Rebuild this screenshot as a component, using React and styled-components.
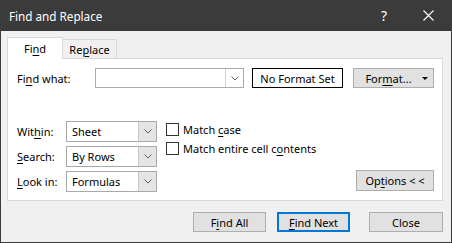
import React from 'react'
import styled, { createGlobalStyle } from 'styled-components'

const Global = createGlobalStyle`
  html, body { margin: 0; padding: 0; background: #f0f0f0; }
  body { font-family: "Noto Sans", "Open Sans", sans-serif; font-size: 11px; color: #000; }
`

const Window = styled.div`
  width: 452px;
  height: 243px;
  box-sizing: border-box;
  border: 1px solid #3b3b3b;
  border-top: none;
  background: #f0f0f0;
  display: flex;
  flex-direction: column;
`
const TitleBar = styled.div`
  height: 31px;
  background: #3b3b3b;
  color: #fff;
  display: flex;
  align-items: center;
  padding-left: 8px;
  font-size: 11.7px;
  flex-shrink: 0;
`
const Title = styled.div`
  flex: 1;
`
const TitleBtn = styled.div`
  width: ${p => p.w}px;
  margin-right: ${p => p.mr || 0}px;
  height: 31px;
  display: flex;
  align-items: center;
  justify-content: center;
  font-size: 14px;
`
const Body = styled.div`
  padding: 7px 8px 0 6px;
  display: flex;
  flex-direction: column;
`
const TabRow = styled.div`
  display: flex;
  align-items: flex-end;
  height: 21px;
  margin-bottom: -1px;
`
const Tab = styled.div`
  box-sizing: border-box;
  width: ${p => p.w}px;
  height: ${p => (p.active ? 22 : 20)}px;
  border: 1px solid #d9d9d9;
  border-bottom: ${p => (p.active ? 'none' : '1px solid #d9d9d9')};
  border-left: ${p => (p.first ? '1px solid #d9d9d9' : 'none')};
  background: ${p => (p.active ? '#fff' : '#f0f0f0')};
  display: flex;
  align-items: center;
  justify-content: center;
  position: relative;
  z-index: 1;
`
const Panel = styled.div`
  box-sizing: border-box;
  height: 143px;
  border: 1px solid #d9d9d9;
  background: #fff;
  padding: 9px 8px 0 9px;
  display: flex;
  flex-direction: column;
`
const Row = styled.div`
  display: flex;
  align-items: center;
  height: 20px;
`
const Label = styled.div`
  width: ${p => p.w}px;
  flex-shrink: 0;
  white-space: nowrap;
`
const Combo = styled.div`
  box-sizing: border-box;
  width: ${p => p.w}px;
  height: ${p => p.h}px;
  border: 1px solid #a9a9a9;
  background: #fff;
  display: flex;
`
const ComboText = styled.div`
  flex: 1;
  padding-left: 5px;
  display: flex;
  align-items: center;
`
const ComboBtn = styled.div`
  width: 17px;
  background: ${p => (p.light ? '#fff' : '#e5e5e5')};
  border-left: 1px solid ${p => (p.light ? '#d0d0d0' : '#c8c8c8')};
  display: flex;
  align-items: center;
  justify-content: center;
`
const FormatBox = styled.div`
  box-sizing: border-box;
  width: 91px;
  height: 20px;
  margin-left: 8px;
  border: 1px solid #000;
  display: flex;
  align-items: center;
  justify-content: center;
`
const Button = styled.div`
  box-sizing: border-box;
  width: ${p => p.w}px;
  height: ${p => p.h || 20}px;
  margin-left: ${p => p.ml || 0}px;
  background: #e1e1e1;
  border: ${p => (p.primary ? '2px solid #0078d7' : '1px solid #adadad')};
  display: flex;
  align-items: center;
  justify-content: center;
  position: relative;
  white-space: nowrap;
`
const Caret = styled.span`
  position: absolute;
  right: 5px;
  top: 8px;
  width: 0;
  height: 0;
  border-left: 3px solid transparent;
  border-right: 3px solid transparent;
  border-top: 3px solid #000;
`
const Lower = styled.div`
  margin-top: 33px;
  display: flex;
`
const Grid = styled.div`
  display: grid;
  grid-template-columns: 49px 91px;
  grid-auto-rows: 21px;
  row-gap: 4px;
  align-items: center;
`
const Checks = styled.div`
  margin-left: 9px;
  padding-top: 1px;
  display: flex;
  flex-direction: column;
  gap: 4px;
`
const CheckRow = styled.div`
  display: flex;
  align-items: center;
  height: 15px;
  gap: 4px;
`
const Box = styled.div`
  box-sizing: border-box;
  width: 13px;
  height: 13px;
  border: 1px solid #333;
  background: #fff;
`
const Spacer = styled.div`
  flex: 1;
  display: flex;
  align-items: flex-end;
  justify-content: flex-end;
  padding-bottom: 1px;
`
const Footer = styled.div`
  margin-top: 11px;
  display: flex;
  justify-content: flex-end;
`
const U = styled.u`
  text-underline-offset: 2px;
`

const Chevron = () => (
  <svg width="8" height="5" viewBox="0 0 8 5">
    <polyline points="0.5,0.5 4,4 7.5,0.5" fill="none" stroke="#606060" strokeWidth="1" />
  </svg>
)

const Select = ({ w, h, children, light }) => (
  <Combo w={w} h={h}>
    <ComboText>{children}</ComboText>
    <ComboBtn light={light}>
      <Chevron />
    </ComboBtn>
  </Combo>
)

export default function App() {
  return (
    <>
      <Global />
      <Window>
        <TitleBar>
          <Title>Find and Replace</Title>
          <TitleBtn w={22} mr={10}>?</TitleBtn>
          <TitleBtn w={46}>
            <svg width="11" height="11" viewBox="0 0 11 11">
              <path d="M0.5 0.5 L10.5 10.5 M10.5 0.5 L0.5 10.5" stroke="#fff" strokeWidth="1.1" />
            </svg>
          </TitleBtn>
        </TitleBar>
        <Body>
          <TabRow>
            <Tab w={56} active first>
              Fi<U>n</U>d
            </Tab>
            <Tab w={54}>
              Re<U>p</U>lace
            </Tab>
          </TabRow>
          <Panel>
            <Row>
              <Label w={78}>
                Fi<U>n</U>d what:
              </Label>
              <Select w={149} h={20} light />
              <FormatBox>No Format Set</FormatBox>
              <Button w={81} ml={10}>
                <span style={{ marginRight: 10 }}>
                  For<U>m</U>at...
                </span>
                <Caret />
              </Button>
            </Row>
            <Lower>
              <Grid>
                <Label>
                  Wit<U>h</U>in:
                </Label>
                <Select w={91} h={21}>Sheet</Select>
                <Label>
                  <U>S</U>earch:
                </Label>
                <Select w={91} h={21}>By Rows</Select>
                <Label>
                  <U>L</U>ook in:
                </Label>
                <Select w={91} h={21}>Formulas</Select>
              </Grid>
              <Checks>
                <CheckRow>
                  <Box />
                  <span>
                    Match <U>c</U>ase
                  </span>
                </CheckRow>
                <CheckRow>
                  <Box />
                  <span>
                    Match entire cell c<U>o</U>ntents
                  </span>
                </CheckRow>
              </Checks>
              <Spacer>
                <Button w={78} h={21}>
                  Op<U>t</U>ions &lt; &lt;
                </Button>
              </Spacer>
            </Lower>
          </Panel>
          <Footer>
            <Button w={73}>
              F<U>i</U>nd All
            </Button>
            <Button w={73} ml={11} primary>
              <U>F</U>ind Next
            </Button>
            <Button w={74} ml={19}>
              Close
            </Button>
          </Footer>
        </Body>
      </Window>
    </>
  )
}
